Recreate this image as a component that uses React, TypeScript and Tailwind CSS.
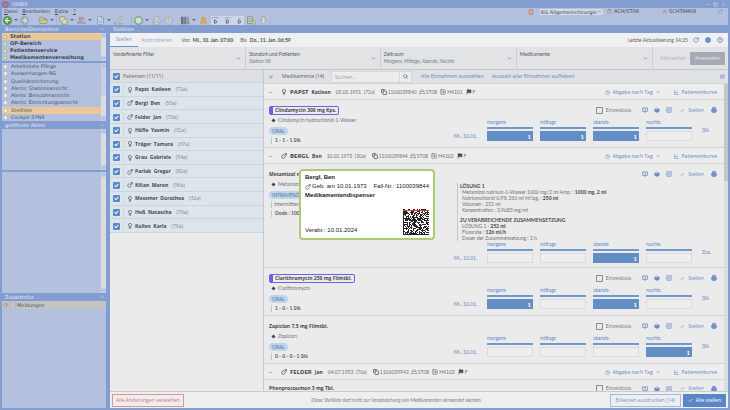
import React, { useId } from "react";
import {
  ArrowLeft, ArrowRight, BedSingle, BookOpen, Check, ChevronDown, ChevronUp, ChevronsDown,
  CircleHelp, Clock, Copy, FileText, Flag, FolderOpen, LineChart, ListOrdered, Minus, PencilLine, Printer, RotateCw,
  Search, Settings, ShoppingBasket, SquareArrowRight, SquarePen, Users, X, UserRound, Clipboard,
} from "lucide-react";

type Sex = "f" | "m";

const SexIcon = ({ sex, className }: { sex: Sex; className: string }) => (
  <svg viewBox="0 0 12 12" className={className} fill="none" stroke="currentColor" strokeWidth="1.4">
    {sex === "f" ? (
      <>
        <circle cx="6" cy="4" r="3.2" />
        <path d="M6 7v5M3.5 9.5h5" />
      </>
    ) : (
      <>
        <circle cx="4.8" cy="7.2" r="3.5" />
        <path d="M7.2 4.8 10.6 1.4M7 1.2h4v4" />
      </>
    )}
  </svg>
);

const areas = ["Station", "OP-Bereich", "Patientenservice", "Medikamentenverwaltung"];
const views = [
  "Arbeitsliste Pflege", "Auswertungen NG", "Qualitätssicherung", "Alerts: Stationsansicht",
  "Alerts: Benutzeransicht", "Alerts: Einrichtungsansicht", "Stellliste", "Cockpit SYNX",
];

const patients: { name: string; age: string; sex: Sex }[] = [
  { name: "Papst  Katleen", age: "(72a)", sex: "f" },
  { name: "Bergl  Ben", age: "(50a)", sex: "m" },
  { name: "Felder  Jan", age: "(70a)", sex: "m" },
  { name: "Höfle  Yasmin", age: "(32a)", sex: "f" },
  { name: "Träger  Tamara", age: "(67a)", sex: "f" },
  { name: "Grau  Gabriele", age: "(54a)", sex: "f" },
  { name: "Parlak  Gregor", age: "(82a)", sex: "m" },
  { name: "Kilian  Maron", age: "(56a)", sex: "m" },
  { name: "Messmer  Dorothea", age: "(32a)", sex: "f" },
  { name: "Heß  Natascha", age: "(76a)", sex: "f" },
  { name: "Kollen  Karla", age: "(79a)", sex: "f" },
];

const Scroll = ({ thumb = false }: { thumb?: boolean }) => (
  <div className="flex w-[5px] shrink-0 flex-col justify-between bg-[#dadce0] text-[#7f9bd0]">
    <span className="flex h-[5px] items-center justify-center bg-[#c3cfe8]"><ChevronUp className="size-[5px]" strokeWidth={3} /></span>
    {thumb && <span className="mb-auto h-[28px] bg-[#c6d0e6]" />}
    <span className="flex h-[5px] items-center justify-center bg-[#c3cfe8]"><ChevronDown className="size-[5px]" strokeWidth={3} /></span>
  </div>
);

const PanelTitle = ({ children }: { children: React.ReactNode }) => (
  <h2 className="flex h-[8px] shrink-0 items-center justify-between pr-[2px] pl-[3px] text-[5px] leading-[8px] text-[#e6ecf8]">
    {children}
    <Minus className="size-[4px]" strokeWidth={3} />
  </h2>
);

const Sidebar = () => (
  <aside className="flex w-[104px] shrink-0 flex-col font-['DejaVu_Sans',sans-serif] text-[5px] text-[#4b5566]">
    <PanelTitle>Bereiche/Übersichten</PanelTitle>
    <div className="flex h-[28px] overflow-hidden bg-[#b3c1de]">
      <ul className="flex-1">
        {areas.map((a, i) => (
          <li key={a} className={`flex h-[7px] items-center gap-[3px] pl-[1px] font-bold leading-[7px] text-[#3f4654] ${i === 0 ? "bg-[#ecc896]" : ""}`}>
            <span className="size-[4px] border border-[#b5c092] bg-[#e3e6b4]" />
            {a}
          </li>
        ))}
      </ul>
      <Scroll />
    </div>
    <div className="mt-[2px] flex h-[58px] overflow-hidden bg-[#b3c1de]">
      <ul className="grid flex-1 auto-rows-fr">
        {views.map((v) => (
          <li key={v} className={`flex items-center gap-[3px] pl-[1px] leading-[7px] ${v === "Stellliste" ? "bg-[#ecc896]" : ""}`}>
            <Clipboard className="size-[5px] fill-[#eceff4] text-[#aaa498]" />
            {v}
          </li>
        ))}
      </ul>
      <Scroll thumb />
    </div>
    <PanelTitle>geöffnete Akten</PanelTitle>
    <div className="flex h-[41px] justify-end bg-[#b3c1de]"><Scroll /></div>
    <div className="mt-[2px] flex h-[121px] justify-end bg-[#b3c1de]"><Scroll /></div>
    <PanelTitle>Zusatzinfos</PanelTitle>
    <div className="flex-1 bg-[#b3c1de]">
      <div className="flex h-[8px] items-center bg-[#c3c3c2] leading-[8px]">
        <RotateCw className="mx-[1px] size-[5px] text-[#777]" />
        <span className="h-[8px] w-[7px] border-x border-[#b8b8b7]" />
        <span className="pl-[1px]">Meldungen</span>
      </div>
    </div>
  </aside>
);

const Divider = () => <span className="h-[9px] w-px bg-[#a5b4d5]" />;
const Caret = () => <span className="mx-[2px] border-x-[2px] border-t-[2px] border-x-transparent border-t-[#5f687a]" />;

const ViewGlyph = ({ top }: { top: string }) => (
  <svg viewBox="0 0 12 12" className="h-[9px] w-[9px]" fill="none">
    <path d={top} stroke="#8fb0c4" strokeWidth="1.4" />
    <path d="M4.5 5.5h1a1.8 1.8 0 0 1 0 4h-1z" stroke="#5c6474" strokeWidth="1.3" />
  </svg>
);

const ChartGlyph = () => (
  <svg viewBox="0 0 12 12" className="size-[9px]">
    <path d="M0 1h3.5v10H0zM4.5 1H7v10H4.5z" fill="#69707d" />
    <path d="M8 1h2.5v6H8z" fill="#8e95a3" />
    <path d="M9.5 7v4M7.5 9h4" stroke="#5d9a5a" strokeWidth="1.6" />
  </svg>
);

const RecordsGlyph = () => (
  <svg viewBox="0 0 12 12" className="size-[9px]">
    <path d="M.5 1h7v9h-7z" fill="#cfd2bd" stroke="#858a7c" />
    <path d="M.5 4h7M.5 7h7" stroke="#858a7c" />
    <circle cx="9" cy="8.5" r="2.4" fill="#c8dcbc" stroke="#7da06f" />
  </svg>
);

const DownGlyph = () => (
  <svg viewBox="0 0 12 12" className="size-[9px]">
    <path d="M4 1h4v5h2.5L6 11 1.5 6H4z" fill="#d9dbd3" stroke="#989d9f" />
  </svg>
);

const Toolbar = () => (
  <div className="flex h-[10px] items-center pl-[1px] text-[#7b8496]">
    <button aria-label="Zurück" className="flex size-[9px] items-center justify-center rounded-full bg-[#5a9a55] text-white"><ArrowLeft className="size-[7px]" strokeWidth={3.5} /></button>
    <Caret />
    <button aria-label="Vor" className="flex size-[9px] items-center justify-center rounded-full bg-[#a5acb5] text-[#dfe3ea]"><ArrowRight className="size-[7px]" strokeWidth={3.5} /></button>
    <span className="w-[10px]" />
    <button aria-label="Öffnen"><FolderOpen className="size-[9px] fill-[#cdcf9c] text-[#8a8c68]" /></button>
    <Caret />
    <Divider />
    <button aria-label="Akten" className="ml-[2px]"><Copy className="size-[9px] fill-[#dcdcae] text-[#868a72]" /></button>
    <Caret />
    <button aria-label="Benutzer" className="ml-[1px]"><Users className="size-[9px] fill-[#8fb0e0] text-[#c06f66]" /></button>
    <Caret />
    <button aria-label="Dokument" className="ml-[2px]"><FileText className="size-[9px] fill-[#d9eaf3] text-[#7193a8]" /></button>
    <Caret />
    <button aria-label="Schreiben" className="ml-[1px]"><PencilLine className="size-[9px] fill-[#d5d5cf] text-[#918f88]" /></button>
    <span className="w-[8px]" />
    <Divider />
    <button aria-label="Zeit" className="ml-[2px]"><Clock className="size-[9px] fill-[#cfe0cf] text-[#64946a]" strokeWidth={3} /></button>
    <Caret />
    <button aria-label="Drucken" className="ml-[1px]"><Printer className="size-[9px] fill-[#d0d3d8] text-[#a0a6b2]" /></button>
    <button aria-label="Hilfe" className="ml-[3px]"><CircleHelp className="size-[9px] fill-[#c9cdd5] text-[#9da4b1]" /></button>
    <span className="w-[8px]" />
    <button aria-label="Auswertung"><ChartGlyph /></button>
    <Caret />
    <button aria-label="Patient" className="ml-[1px]"><UserRound className="size-[9px] fill-[#e6b04f] text-[#c3935a]" /></button>
    <div className="ml-[3px] flex gap-[3px] bg-[#cdd5e6]">
      <button aria-label="Ansicht 1"><ViewGlyph top="M1 3.5Q6 0 11 3.5" /></button>
      <button aria-label="Ansicht 2"><ViewGlyph top="M2 2.5h8" /></button>
      <button aria-label="Ansicht 3"><ViewGlyph top="M4 3h4" /></button>
    </div>
    <button aria-label="Datensätze" className="ml-[3px]"><RecordsGlyph /></button>
    <button aria-label="Herunterladen" className="mr-[2px] ml-[3px]"><DownGlyph /></button>
    <Divider />
  </div>
);

const TopBar = () => (
  <header className="shrink-0 font-['DejaVu_Sans',sans-serif] text-[5px] text-[#3f4756]">
    <div className="flex h-[8px] items-center gap-[3px] pr-[2px] text-[#dfe6f5]">
      <svg viewBox="0 0 12 12" className="size-[7px]" fill="none" stroke="#c4506a" strokeWidth="2"><circle cx="6" cy="6" r="4.5" /><path d="M6 3v4" /></svg>
      <h1 className="flex-1 leading-[8px]">ORBIS</h1>
      <Minus className="size-[5px]" /><Copy className="size-[5px]" /><X className="size-[5px]" />
    </div>
    <div className="bg-[#b3c1de]">
      <div className="flex h-[7px] items-center leading-[7px]">
        <nav className="flex flex-1 gap-[5px] pl-[2px]">
          {["Datei", "Bearbeiten", "Extra", "?"].map((m) => (
            <button key={m}><span className="underline">{m[0]}</span>{m.slice(1)}</button>
          ))}
        </nav>
        <Clipboard className="mr-[6px] size-[6px] fill-[#d9a9a4] text-[#b5605c]" />
        <div className="relative w-[63px]">
          <select aria-label="Fachabteilung" className="block h-[6px] w-full appearance-none bg-[#d3d9e6] pl-[1px] leading-[6px]"><option>KG Allgemeinchirurgie</option></select>
          <ChevronDown className="pointer-events-none absolute top-0 right-[1px] size-[5px]" />
        </div>
        <span className="ml-[4px] flex w-[55px] items-center gap-[2px]"><Clipboard className="size-[5px] text-[#b9705c]" />ACH/ST08</span>
        <span className="flex w-[56px] items-center gap-[2px]"><UserRound className="size-[5px] text-[#c56b58]" />SCHTAM08</span>
        <RotateCw className="mr-[5px] size-[5px] text-[#6e89b8]" />
      </div>
      <Toolbar />
    </div>
  </header>
);

const Filter = ({ label, value, className }: { label: string; value: string; className: string }) => {
  const id = useId();
  return (
    <div className={`relative border-r border-[#cdcfd2] px-[3px] pt-[4px] font-[Lato,'Open_Sans',sans-serif] ${className}`}>
      <label htmlFor={id} className="block leading-[6px] text-[#55585d]">{label}</label>
      <select id={id} className="block h-[8px] w-full appearance-none bg-transparent italic leading-[8px] text-[#7b7e83]"><option>{value}</option></select>
      <ChevronDown className="pointer-events-none absolute top-[9px] right-[4px] size-[5px] text-[#6f93cb]" strokeWidth={4} />
    </div>
  );
};

const TickBox = ({ label }: { label: string }) => (
  <span className="relative flex size-[7px] shrink-0">
    <input type="checkbox" defaultChecked aria-label={label} className="size-[7px] appearance-none rounded-[1px] bg-[#5b8ac8]" />
    <Check className="pointer-events-none absolute top-[1px] left-[1px] size-[5px] text-white" strokeWidth={5} />
  </span>
);

const PatientList = () => (
  <section className="w-[154px] shrink-0 border-r border-[#c6cad0]">
    <div className="flex h-[13px] items-center gap-[3px] border-b border-[#cfd5dc] bg-[#dedfe1] pl-[3px]">
      <TickBox label="Alle Patienten" />
      <span>Patienten (11/11)</span>
    </div>
    <ul className="grid h-[150px] auto-rows-fr">
      {patients.map((p) => (
        <li key={p.name} className="flex items-center border-b border-[#cbd5df] bg-[#dce4ec] pt-[1px] pl-[3px]">
          <TickBox label={p.name} />
          <span className="ml-[3px] h-[10px] w-[4px] border-l border-[#cdd7e0]" />
          <SexIcon sex={p.sex} className="size-[6px]" />
          <span className="ml-[2px] whitespace-pre font-bold text-[#45494f]">{p.name}</span>
          <span className="ml-[5px] text-[#7f848b]">{p.age}</span>
        </li>
      ))}
    </ul>
  </section>
);

const PatientHeader = ({ sex, last, first, born, nr, room }: { sex: Sex; last: string; first: string; born: string; nr: string; room: string }) => (
  <div className="flex h-[16px] shrink-0 items-center border-b border-[#d5d6d8] bg-[#ededed] pt-[1px] pr-[7px] pl-[4px]">
    <button aria-label="Einklappen" className="text-[#6f93cb]"><ChevronDown className="size-[5px]" strokeWidth={4} /></button>
    <SexIcon sex={sex} className="mr-[3px] ml-[8px] size-[6px] text-[#55595f]" />
    <h3 className="flex items-baseline gap-[3px] font-bold text-[#3f4349]"><span className="text-[6px]">{last}</span>{first}</h3>
    <div className="flex items-center font-[Lato,'Open_Sans',sans-serif] text-[#6f7379]">
      <span className="mr-[6px] ml-[5px] whitespace-pre">{born}</span>
      <Copy className="mr-[1px] size-[6px] text-[#4b4f55]" strokeWidth={3} />{nr}
      <BedSingle className="mr-[1px] ml-[2px] size-[6px]" />ST08
      <SquareArrowRight className="mr-[1px] ml-[3px] size-[6px] text-[#4b4f55]" />{room}
      <Flag className="mr-[1px] ml-[3px] size-[6px] fill-current text-[#4b4f55]" />F
    </div>
    <div className="ml-auto flex items-center text-[#6486c2]">
      <button className="flex items-center gap-[3px]"><Clock className="size-[5px]" />Abgabe nach Tag<ChevronDown className="size-[4px]" strokeWidth={4} /></button>
      <button className="ml-[14px] flex items-center gap-[3px]"><LineChart className="size-[5px]" strokeWidth={3} />Patientenkurve</button>
    </div>
  </div>
);

const MedActions = ({ single = true }: { single?: boolean }) => (
  <div className="ml-auto flex shrink-0 items-center text-[#6b8bc6]">
    {single && (
      <label className="mr-[11px] flex items-center gap-[3px] text-[#6b6f75]">
        <input type="checkbox" className="size-[7px] appearance-none border border-[#8b8e92]" />
        Einzeldosis
      </label>
    )}
    <button aria-label="Information" className="mr-[6px]"><BookOpen className="size-[6px]" strokeWidth={3} /></button>
    <button aria-label="Bestellen" className="mr-[6px]"><ShoppingBasket className="size-[6px] fill-current" strokeWidth={3} /></button>
    <button aria-label="Bearbeiten" className="mr-[8px]"><SquarePen className="size-[6px]" strokeWidth={3} /></button>
    <button className="flex items-center gap-[3px]"><Check className="size-[5px]" strokeWidth={3} />Stellen</button>
    <button aria-label="Drucken" className="ml-[7px]"><Printer className="size-[6px] fill-[#7593cb]" strokeWidth={3} /></button>
  </div>
);

const slots = ["morgens", "mittags", "abends", "nachts"];

const Doses = ({ values, unit }: { values: string[]; unit: string }) => (
  <div className="flex items-end font-[Lato,'Open_Sans',sans-serif] text-[#5f89c6]">
    <span className="mr-[10px] whitespace-nowrap leading-[10px]">Mi., 10.01.</span>
    <div className="flex gap-[7px]">
      {slots.map((s, i) => (
        <label key={s} className="flex w-[46px] flex-col">
          <span className="mb-[1px] leading-[7px]">{s}</span>
          <span className="h-[2px] w-full bg-[#7199cf]" />
          <input
            readOnly
            value={values[i]}
            className={`mt-[2px] h-[10px] w-full px-[2px] text-right text-[6px] font-bold text-white ${values[i] ? "bg-[#628dc5]" : "border border-[#dadbdc] bg-[#eeeeee]"}`}
          />
        </label>
      ))}
    </div>
    <span className="mb-[6px] ml-[10px] w-[15px] leading-[10px]">{unit}</span>
  </div>
);

type MedProps = { name: string; agent: string; route: string; dose: string; values: string[]; unit: string; marked?: boolean; single?: boolean; note?: string; children?: React.ReactNode };

const Medication = ({ name, agent, route, dose, values, unit, marked, single, note, children }: MedProps) => (
  <article className="flex shrink-0 flex-col border-b border-[#d2d3d5] pt-[5px] pr-[7px] pb-[3px] pl-[5px]">
    <div className="flex h-[10px] items-center">
      <h4 className={`font-bold text-[#45494f] ${marked ? "h-[9px] rounded-[2px] border border-l-4 border-[#6a63e6] pr-[2px] pl-[2px] leading-[7px]" : ""}`}>{name}</h4>
      <MedActions single={single} />
    </div>
    <div className="flex font-[Lato,'Open_Sans',sans-serif]">
      <div className="w-[180px] shrink-0">
        <p className="mt-[2px] flex h-[7px] items-center gap-[3px] pl-[3px] text-[#6f7379]"><span className="size-[3px] rotate-45 bg-[#45494f]" />{agent}</p>
        <span className="mt-[3px] inline-block h-[8px] rounded-full bg-[#bdd5ed] px-[3px] align-top font-['Open_Sans',sans-serif] leading-[8px] text-[#4d6c92]">{route}</span>
        {note && <p className="mt-[2px] ml-[2px] border-l border-[#c3c5c8] pl-[2px] leading-[7px] text-[#6f7379]">{note}</p>}
        <p className="mt-[2px] ml-[2px] border-l border-[#c3c5c8] pl-[3px] font-bold leading-[7px] text-[#565a60]">{dose}</p>
      </div>
      <div className={`flex flex-1 flex-col items-end justify-end ${children ? "pb-[1px]" : "pb-[3px]"}`}>
        {children}
        <Doses values={values} unit={unit} />
      </div>
    </div>
  </article>
);

const Composition = () => (
  <div className="w-full pl-[8px]">
    <div className="mt-[4px] w-[170px] border-l border-[#c3c5c8] pl-[2px] leading-[6px] text-[#6f7379]">
      <h5 className="font-bold text-[#45494f]">LÖSUNG 1</h5>
      <div className="pl-[2px]">
        <p className="whitespace-nowrap">Metamizol natrium-1-Wasser 1000 mg/2 ml Amp. : <b className="text-[#45494f]">1000 mg, 2 ml</b></p>
        <p>Natriumchlorid 0,9% 250 ml Inf.lsg. : <b className="text-[#45494f]">250 ml</b></p>
        <p>Volumen : 252 ml</p>
        <p>Konzentration : 3,9683 mg/ml</p>
      </div>
      <h5 className="mt-[4px] font-bold text-[#45494f]">ZU VERABREICHENDE ZUSAMMENSETZUNG</h5>
      <div className="pl-[2px]">
        <p>LÖSUNG 1 : <b className="text-[#45494f]">252 ml</b></p>
        <p>Flussrate : <b className="text-[#45494f]">126 ml/h</b></p>
        <p>Dauer der Zusammensetzung : 2 h</p>
      </div>
    </div>
  </div>
);

const codeSize = 26;
let seed = 90210;
const nextBit = () => {
  seed = (Math.imul(seed, 1103515245) + 12345) >>> 0;
  return ((seed >>> 16) & 255) < 140;
};
const codeCells = Array.from({ length: codeSize * codeSize }, (_, i) => {
  const x = i % codeSize;
  const y = Math.floor(i / codeSize);
  const bit = nextBit();
  if (x === 0 || y === codeSize - 1) return true;
  if (x === codeSize - 1) return y % 2 === 1;
  return bit;
});

const MatrixCode = () => (
  <svg viewBox="0 0 26 27" className="h-[27px] w-[26px]">
    {codeCells.map((on, i) => on && <rect key={i} x={i % codeSize} y={Math.floor(i / codeSize) + 1} width="1" height="1" fill="#222" />)}
    <path d="M0 2.5h26" stroke="#e03a40" strokeWidth="1" />
  </svg>
);

const LabelPopup = () => (
  <div role="dialog" aria-label="Etikett" className="absolute top-[169px] left-[299px] flex h-[71px] w-[136px] flex-col rounded-[4px] border-2 border-[#adcb70] bg-white px-[4px] pt-[2px] pb-[3px] font-['Liberation_Sans',Arial,sans-serif] text-[6px] leading-[9px] text-[#222]">
    <b>Bergl, Ben</b>
    <p className="flex items-center gap-[1px]"><SexIcon sex="m" className="size-[6px] text-[#666]" />Geb. am 10.01.1973<span className="ml-auto">Fall-Nr.: 1100039844</span></p>
    <b>Medikamentendispenser</b>
    <div className="mt-auto flex items-end justify-between">
      <span>Verabr.: 10.01.2024</span>
      <MatrixCode />
    </div>
  </div>
);

const Medications = () => (
  <section className="flex min-w-0 flex-1 flex-col">
    <div className="flex h-[14px] shrink-0 items-center border-b border-[#cfd1d4] bg-[#dfe1e4] pr-[3px] pl-[4px] text-[#6486c2]">
      <button aria-label="Alle einklappen"><ChevronsDown className="size-[6px]" strokeWidth={3} /></button>
      <span className="ml-[8px] w-[49px] whitespace-nowrap text-[#5c5f64]">Medikamente (14)</span>
      <div className="flex h-[12px] items-center border border-[#d5d7da] bg-[#ececec]">
        <input aria-label="Suchen" placeholder="Suchen..." className="h-full w-[68px] border-r border-[#d5d7da] px-[3px] placeholder:text-[#9b9ea3]" />
        <button aria-label="Suche starten" className="px-[3px]"><Search className="size-[5px]" strokeWidth={4} /></button>
      </div>
      <button className="ml-[9px]">Alle Einnahmen auswählen</button>
      <button className="ml-[8px]">Auswahl aller Einnahmen aufheben</button>
      <button aria-label="Sortieren" className="ml-auto"><ListOrdered className="size-[5px]" strokeWidth={3} /></button>
    </div>
    <div className="flex min-h-0 flex-1">
      <div className="flex min-w-0 flex-1 flex-col overflow-hidden">
        <PatientHeader sex="f" last="PAPST" first="Katleen" born="05.05.1951  (72a)" nr="1100039840" room="H4101" />
        <Medication marked name="Clindamycin 300 mg Kps." agent="Clindamycin hydrochlorid-1-Wasser" route="ORAL" dose="1 - 1 - 1 Stk" values={["1", "1", "1", ""]} unit="Stk" />
        <PatientHeader sex="m" last="BERGL" first="Ben" born="10.01.1973  (50a)" nr="1100039844" room="H4102" />
        <Medication name="Metamizol natrium 1000 mg" agent="Metamizol natrium" route="INTRAVENÖS" note="Intermittierend" dose="Dosis : 1000 mg" single={false} values={["", "", "1", ""]} unit="Zus.">
          <Composition />
        </Medication>
        <Medication marked name="Clarithromycin 250 mg Filmtbl." agent="Clarithromycin" route="ORAL" dose="1 - 0 - 1 Stk" values={["1", "", "1", ""]} unit="Stk" />
        <Medication name="Zopiclon 7,5 mg Filmtbl." agent="Zopiclon" route="ORAL" dose="0 - 0 - 0 - 1 Stk" values={["", "", "", "1"]} unit="Stk" />
        <PatientHeader sex="m" last="FELDER" first="Jan" born="04.07.1953  (70a)" nr="1100039942" room="H4103" />
        <div className="flex h-[14px] shrink-0 items-center pt-[3px] pr-[7px] pl-[5px]">
          <h4 className="font-bold text-[#45494f]">Phenprocoumon 3 mg Tbl.</h4>
          <MedActions />
        </div>
      </div>
      <div className="w-[4px] shrink-0 bg-[#dcdddf]"><div className="h-[97px] bg-[#c5c6c8]" /></div>
    </div>
  </section>
);

export default function App() {
  return (
    <div className="relative flex h-screen flex-col overflow-hidden bg-[#849dd0] pr-[2px] pb-[2px] pl-[2px]">
      <TopBar />
      <div className="flex min-h-0 flex-1">
        <Sidebar />
        <main className="ml-[4px] flex min-w-0 flex-1 flex-col font-['Open_Sans','Noto_Sans',sans-serif] text-[5px] leading-[7px] text-[#5f6369]">
          <h2 className="h-[8px] shrink-0 pl-[3px] font-['DejaVu_Sans',sans-serif] leading-[8px] text-[#e6ecf8]">Stellliste</h2>
          <div className="flex h-[14px] shrink-0 items-center bg-[#f0f0f0] pr-[5px]">
            <button className="h-full border-b border-[#6b93cb] px-[6px] text-[#6f93cb]">Stellen</button>
            <button className="px-[4px] text-[#86a2d3]">Kontrollieren</button>
            <div className="ml-[5px] flex flex-1 items-center font-[Lato,'Open_Sans',sans-serif]">
              <span>Von</span><b className="ml-[3px] text-[#4d5157]">Mi., 10. Jan. 07:00</b>
              <span className="ml-[7px]">Bis</span><b className="ml-[3px] text-[#4d5157]">Do., 11. Jan. 06:59</b>
              <span className="ml-auto">Letzte Aktualisierung 14:25</span>
            </div>
            <div className="ml-[5px] flex gap-[6px] text-[#6488c6]">
              <button aria-label="Aktualisieren"><RotateCw className="size-[6px]" strokeWidth={3} /></button>
              <button aria-label="Einstellungen"><Settings className="size-[6px]" strokeWidth={5} /></button>
              <button aria-label="Hilfe"><CircleHelp className="size-[6px]" strokeWidth={3} /></button>
            </div>
          </div>
          <div className="flex h-[23px] shrink-0 border-b border-[#c3c6ca] bg-[#e1e3e5]">
            <Filter label="Vordefinierte Filter" value="" className="flex-[136]" />
            <Filter label="Standort und Patienten" value="Station 08" className="flex-[135]" />
            <Filter label="Zeitraum" value="Morgens, Mittags, Abends, Nachts" className="flex-[136]" />
            <Filter label="Medikamente" value="" className="flex-[136]" />
            <div className="flex items-center gap-[4px] pr-[3px] pl-[8px]">
              <button className="text-[#b0b3b7]">Abbrechen</button>
              <button className="h-[13px] bg-[#a5abb2] px-[5px] text-[#e6e8ea]">Anwenden</button>
            </div>
          </div>
          <div className="flex min-h-0 flex-1 bg-[#ebebeb]">
            <PatientList />
            <Medications />
          </div>
          <footer className="flex h-[17px] shrink-0 items-center border-t border-[#c9cbce] bg-[#eeeeee] pr-[2px] pl-[2px]">
            <button className="h-[13px] border border-[#dd9696] px-[3px] text-[#cf7373]">Alle Änderungen verwerfen</button>
            <p className="flex-1 text-center font-[Lato,'Open_Sans',sans-serif] italic text-[#7f8287]">Diese Stellliste darf nicht zur Verabreichung von Medikamenten verwendet werden.</p>
            <button className="h-[13px] border border-[#a3bce2] px-[5px] text-[#6f93cb]">Etiketten ausdrucken (14)</button>
            <button className="ml-[2px] flex h-[13px] items-center gap-[3px] bg-[#5b86c6] px-[5px] text-white"><Check className="size-[5px]" strokeWidth={3} />Alle stellen</button>
          </footer>
        </main>
      </div>
      <LabelPopup />
    </div>
  );
}
